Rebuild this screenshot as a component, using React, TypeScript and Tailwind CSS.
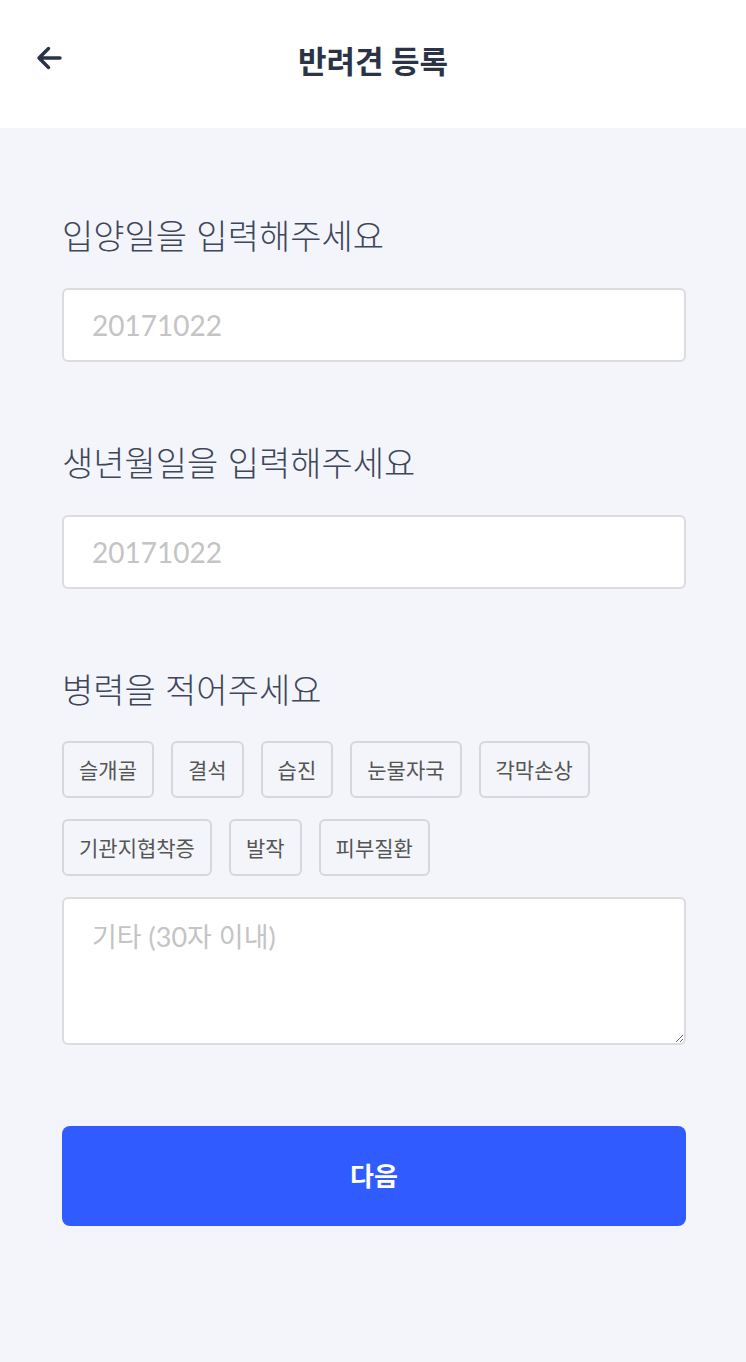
import React, { useState } from "react";

const diseases = [
  "슬개골",
  "결석",
  "습진",
  "눈물자국",
  "각막손상",
  "기관지협착증",
  "발작",
  "피부질환",
];

const BackArrow: React.FC = () => (
  <svg width="28" height="28" viewBox="0 0 28 28" fill="none">
    <path
      d="M25 14H4M13.5 4.5L4 14l9.5 9.5"
      stroke="#2b3447"
      strokeWidth="3.4"
      strokeLinecap="round"
      strokeLinejoin="round"
    />
  </svg>
);

const App: React.FC = () => {
  const [adoptDate, setAdoptDate] = useState("");
  const [birthDate, setBirthDate] = useState("");
  const [selected, setSelected] = useState<string[]>([]);
  const [etc, setEtc] = useState("");

  const toggle = (name: string) =>
    setSelected((prev) =>
      prev.includes(name) ? prev.filter((n) => n !== name) : [...prev, name]
    );

  return (
    <div className="min-h-[1362px] bg-[#f4f5fa] font-['Lato','Noto_Sans_CJK_KR',sans-serif]">
      {/* 헤더 */}
      <header className="relative flex h-[128px] items-center justify-center bg-white pb-[6px]">
        <button className="absolute left-[35px] top-[44px] p-0">
          <BackArrow />
        </button>
        <h1 className="text-[31px] font-bold text-[#2b3447]">반려견 등록</h1>
      </header>

      <main className="pl-[62px] pr-[60px] pt-[88px]">
        {/* 입양일 */}
        <label className="block text-[34px] leading-[40px] font-light text-[#3e465a]">
          입양일을 입력해주세요
        </label>
        <input
          value={adoptDate}
          onChange={(e) => setAdoptDate(e.target.value)}
          placeholder="20171022"
          className="mt-[32px] block h-[74px] w-full rounded-[6px] border-2 border-[#dcdcdf] bg-white px-[28px] text-[28px] text-[#333] outline-none placeholder:text-[#c4c4c4]"
        />

        {/* 생년월일 */}
        <label className="mt-[81px] block text-[34px] leading-[40px] font-light text-[#3e465a]">
          생년월일을 입력해주세요
        </label>
        <input
          value={birthDate}
          onChange={(e) => setBirthDate(e.target.value)}
          placeholder="20171022"
          className="mt-[32px] block h-[74px] w-full rounded-[6px] border-2 border-[#dcdcdf] bg-white px-[28px] text-[28px] text-[#333] outline-none placeholder:text-[#c4c4c4]"
        />

        {/* 병력 */}
        <label className="mt-[81px] block text-[34px] leading-[40px] font-light text-[#3e465a]">
          병력을 적어주세요
        </label>
        <div className="mt-[31px] flex flex-wrap gap-x-[17px] gap-y-[21px]">
          {diseases.map((d) => (
            <button
              key={d}
              onClick={() => toggle(d)}
              className={
                selected.includes(d)
                  ? "flex h-[57px] items-center rounded-[6px] border-2 border-[#2f5bff] px-[15px] text-[21px] text-[#2f5bff]"
                  : "flex h-[57px] items-center rounded-[6px] border-2 border-[#d6d7dc] px-[15px] text-[21px] text-[#555]"
              }
            >
              {d}
            </button>
          ))}
        </div>
        <textarea
          value={etc}
          onChange={(e) => setEtc(e.target.value)}
          placeholder="기타 (30자 이내)"
          className="mt-[21px] block h-[148px] w-full rounded-[6px] border-2 border-[#dcdcdf] bg-white px-[28px] pt-[19px] text-[27px] leading-[38px] text-[#333] outline-none placeholder:text-[#c4c4c4]"
        />

        <button className="mt-[81px] flex h-[100px] w-full items-center justify-center rounded-[8px] bg-[#2f5bff] text-[26px] font-bold text-white">
          다음
        </button>
      </main>
    </div>
  );
};

export default App;
